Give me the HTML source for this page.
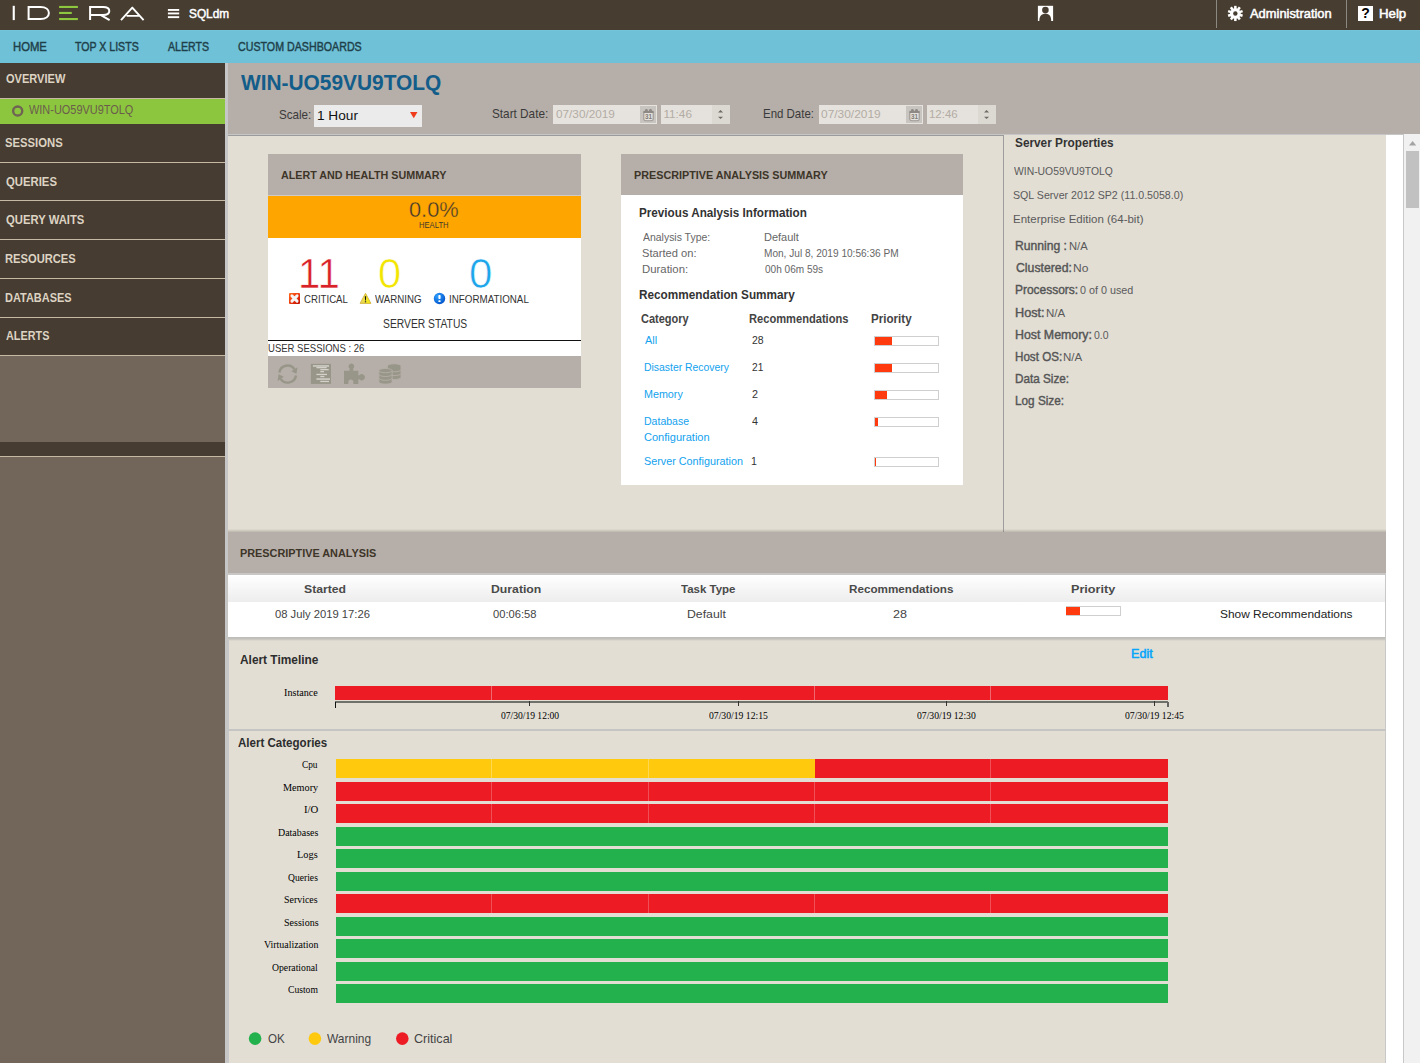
<!DOCTYPE html>
<html><head><meta charset="utf-8">
<style>
html,body{margin:0;padding:0;}
body{width:1420px;height:1063px;overflow:hidden;position:relative;background:#e2ded4;font-family:"Liberation Sans",sans-serif;}
.b{position:absolute;}
.t{position:absolute;white-space:pre;transform-origin:0 0;}
svg{position:absolute;overflow:visible;}
</style></head><body>
<!-- top bar -->
<div class="b" style="left:0;top:0;width:1420px;height:30px;background:#473d31"></div>
<svg style="left:0;top:0" width="160" height="30">
 <rect x="12.7" y="5.8" width="2.1" height="14.3" fill="#fff"/>
 <path d="M28.6,6.9 V19.05 H40.5 C46,19.05 48.9,16.2 48.9,12.97 C48.9,9.7 46,6.9 40.5,6.9 Z" fill="none" stroke="#fff" stroke-width="2.0"/>
 <rect x="59.1" y="5.9" width="18.8" height="2.1" fill="#8dc63f"/>
 <rect x="59.1" y="11.9" width="12.7" height="2.1" fill="#8dc63f"/>
 <rect x="59.1" y="18" width="18.8" height="2.1" fill="#8dc63f"/>
 <path d="M90.1,20.1 V6.9 H103 C107.5,6.9 109.3,8.6 109.3,10.9 C109.3,13.2 107.5,14.9 103,14.9 H90.1 M100.5,14.9 L109.6,20.2" fill="none" stroke="#fff" stroke-width="2.0"/>
 <path d="M121,20.1 L132.3,7.6 L143.6,20.1 M126.6,15.9 H140.2" fill="none" stroke="#fff" stroke-width="1.9" stroke-linejoin="round"/>
 <rect x="167.9" y="9" width="11.3" height="1.9" fill="#fff"/>
 <rect x="167.9" y="12.5" width="11.3" height="1.9" fill="#fff"/>
 <rect x="167.9" y="16.2" width="11.3" height="1.9" fill="#fff"/>
</svg>
<svg style="left:1030px;top:0" width="40" height="30">
 <rect x="7.9" y="5.8" width="15.2" height="15.2" fill="#fff"/>
 <circle cx="15.4" cy="10.1" r="3.3" fill="#473d31"/>
 <path d="M9.3,21 C9.3,16.2 11.5,13.8 15.4,13.8 C19.3,13.8 21.2,16.2 21.2,21 Z" fill="#473d31"/>
</svg>
<div class="b" style="left:1216px;top:0;width:1.4px;height:28px;background:#8c8882"></div>
<div class="b" style="left:1346px;top:0;width:1.4px;height:28px;background:#8c8882"></div>
<svg style="left:1220px;top:0px" width="30" height="30"><g transform="translate(15.35,13.45)"><g fill="#fff"><circle cx="0" cy="0" r="5.3"/><rect x="-1.25" y="-7.6" width="2.5" height="3.4" transform="rotate(0)"/><rect x="-1.25" y="-7.6" width="2.5" height="3.4" transform="rotate(36)"/><rect x="-1.25" y="-7.6" width="2.5" height="3.4" transform="rotate(72)"/><rect x="-1.25" y="-7.6" width="2.5" height="3.4" transform="rotate(108)"/><rect x="-1.25" y="-7.6" width="2.5" height="3.4" transform="rotate(144)"/><rect x="-1.25" y="-7.6" width="2.5" height="3.4" transform="rotate(180)"/><rect x="-1.25" y="-7.6" width="2.5" height="3.4" transform="rotate(216)"/><rect x="-1.25" y="-7.6" width="2.5" height="3.4" transform="rotate(252)"/><rect x="-1.25" y="-7.6" width="2.5" height="3.4" transform="rotate(288)"/><rect x="-1.25" y="-7.6" width="2.5" height="3.4" transform="rotate(324)"/></g><circle cx="0" cy="0" r="2.2" fill="#473d31"/></g></svg>
<div class="b" style="left:1357.9px;top:5.9px;width:15.1px;height:14.9px;background:#fff"></div>
<div class="t" style="left:1361.2px;top:6.2px;font-size:14px;line-height:14px;font-weight:bold;color:#000">?</div>

<!-- nav -->
<div class="b" style="left:0;top:30px;width:1420px;height:33px;background:#6ec1d6"></div>
<div class="b" style="left:0;top:30px;width:1420px;height:1px;background:#74c5da"></div>

<!-- sidebar -->
<div class="b" style="left:0;top:63px;width:225px;height:1000px;background:#72665a"></div>
<div class="b" style="left:0;top:63px;width:225px;height:292px;background:#463c31"></div>
<div class="b" style="left:0;top:98px;width:225px;height:1px;background:#c6b9a4"></div>
<div class="b" style="left:0;top:99px;width:225px;height:25px;background:#8cc63f"></div>
<div class="b" style="left:0;top:162px;width:225px;height:1px;background:#c6b9a4"></div>
<div class="b" style="left:0;top:200px;width:225px;height:1px;background:#c6b9a4"></div>
<div class="b" style="left:0;top:239px;width:225px;height:1px;background:#c6b9a4"></div>
<div class="b" style="left:0;top:278px;width:225px;height:1px;background:#c6b9a4"></div>
<div class="b" style="left:0;top:317px;width:225px;height:1px;background:#c6b9a4"></div>
<div class="b" style="left:0;top:355px;width:225px;height:1px;background:#c6b9a4"></div>
<div class="b" style="left:0;top:442px;width:225px;height:14px;background:#463c31"></div>
<div class="b" style="left:0;top:456px;width:225px;height:1px;background:#c6b9a4"></div>
<svg style="left:0;top:99px" width="40" height="25">
 <circle cx="17.7" cy="12" r="4.55" fill="none" stroke="#6f6354" stroke-width="2.4"/>
</svg>
<div class="b" style="left:225px;top:63px;width:3px;height:1000px;background:#c6c6c6"></div>

<!-- header -->
<div class="b" style="left:228px;top:63px;width:1192px;height:71px;background:#b6aea8"></div>
<div class="b" style="left:228px;top:134px;width:1176px;height:1px;background:#c6c6c6"></div>
<div class="b" style="left:228px;top:135px;width:776px;height:1px;background:#9b9b9b"></div>
<div class="b" style="left:314.2px;top:105.3px;width:107.7px;height:21.5px;background:#ebebeb"></div>
<svg style="left:409.5px;top:111.5px" width="8" height="7"><path d="M0,0 H7.5 L3.75,6.3 Z" fill="#f03c1c"/></svg>
<!-- start date -->
<div class="b" style="left:553px;top:105.2px;width:104px;height:18.7px;background:#e6e3de"></div>
<div class="b" style="left:640px;top:105.9px;width:16px;height:16.8px;background:#c8c4c0"></div>
<svg style="left:640px;top:105.9px" width="16" height="17">
 <rect x="3.8" y="5.6" width="9.4" height="9.1" rx="1.6" fill="#e4e1dc" stroke="#9d9792" stroke-width="1.1"/>
 <rect x="3.4" y="4.9" width="10.2" height="2.1" fill="#8e8984"/>
 <circle cx="6.4" cy="4.3" r="1.4" fill="#8e8984"/><circle cx="10.5" cy="4.3" r="1.4" fill="#8e8984"/>
 <text x="8.5" y="13.2" font-family="Liberation Sans" font-size="6.3" font-weight="bold" text-anchor="middle" fill="#807b76">31</text>
</svg>
<div class="b" style="left:661px;top:105px;width:69px;height:19px;background:#e5e2dd"></div>
<div class="b" style="left:712px;top:105px;width:18px;height:19px;background:#dcd9d3"></div>
<svg style="left:717.9px;top:110px" width="6" height="10"><path d="M0,2.4 L2.55,0 L5.1,2.4 Z M0,6.7 H5.1 L2.55,9 Z" fill="#6e6a66"/></svg>
<!-- end date -->
<div class="b" style="left:819px;top:105.2px;width:104px;height:18.7px;background:#e6e3de"></div>
<div class="b" style="left:906px;top:105.9px;width:16px;height:16.8px;background:#c8c4c0"></div>
<svg style="left:906px;top:105.9px" width="16" height="17">
 <rect x="3.8" y="5.6" width="9.4" height="9.1" rx="1.6" fill="#e4e1dc" stroke="#9d9792" stroke-width="1.1"/>
 <rect x="3.4" y="4.9" width="10.2" height="2.1" fill="#8e8984"/>
 <circle cx="6.4" cy="4.3" r="1.4" fill="#8e8984"/><circle cx="10.5" cy="4.3" r="1.4" fill="#8e8984"/>
 <text x="8.5" y="13.2" font-family="Liberation Sans" font-size="6.3" font-weight="bold" text-anchor="middle" fill="#807b76">31</text>
</svg>
<div class="b" style="left:927px;top:105px;width:69px;height:19px;background:#e5e2dd"></div>
<div class="b" style="left:978px;top:105px;width:18px;height:19px;background:#dcd9d3"></div>
<svg style="left:983.9px;top:110px" width="6" height="10"><path d="M0,2.4 L2.55,0 L5.1,2.4 Z M0,6.7 H5.1 L2.55,9 Z" fill="#6e6a66"/></svg>

<!-- right strip + scrollbar -->
<div class="b" style="left:1386px;top:135px;width:18px;height:928px;background:#ffffff"></div>
<div class="b" style="left:1403px;top:134px;width:1px;height:929px;background:#c8c8c8"></div>
<div class="b" style="left:1404px;top:134px;width:16px;height:929px;background:#f1f1f1"></div>
<svg style="left:1408.9px;top:140.7px" width="8" height="5"><path d="M0,4.4 L3.6,0 L7.2,4.4 Z" fill="#a3a3a3"/></svg>
<div class="b" style="left:1406px;top:151px;width:13px;height:56.7px;background:#c1c1c1"></div>

<!-- divider -->
<div class="b" style="left:1003px;top:136px;width:1.3px;height:396px;background:#9d9d9d"></div>

<!-- alert card -->
<div class="b" style="left:268px;top:154px;width:313px;height:41px;background:#b6aea8"></div>
<div class="b" style="left:268px;top:195px;width:313px;height:1px;background:#cfcac5"></div>
<div class="b" style="left:268px;top:196px;width:313px;height:42px;background:#ffa500"></div>
<div class="b" style="left:268px;top:238px;width:313px;height:118px;background:#ffffff"></div>
<div class="b" style="left:268px;top:340px;width:313px;height:1.2px;background:#111"></div>
<div class="b" style="left:268px;top:356px;width:313px;height:32px;background:#b6aea8"></div>
<svg style="left:280px;top:288px" width="180" height="20">
 <defs>
  <linearGradient id="gc" x1="0" y1="0" x2="1" y2="1"><stop offset="0" stop-color="#ff6a1a"/><stop offset="0.5" stop-color="#ee3a10"/><stop offset="1" stop-color="#b80c00"/></linearGradient>
  <linearGradient id="gw" x1="0" y1="0" x2="1" y2="0"><stop offset="0" stop-color="#e6d46a"/><stop offset="1" stop-color="#f7f000"/></linearGradient>
  <radialGradient id="gi" cx="0.35" cy="0.3" r="0.8"><stop offset="0" stop-color="#2ea0ff"/><stop offset="1" stop-color="#0050c8"/></radialGradient>
 </defs>
 <rect x="9" y="5" width="11" height="11" rx="1" fill="url(#gc)"/>
 <path d="M11.9,7.9 L17.1,13.1 M17.1,7.9 L11.9,13.1" stroke="#f4f4f4" stroke-width="2.9" stroke-linecap="round"/>
 <path d="M85.5,5.3 L90.9,15.4 H80.1 Z" fill="url(#gw)" stroke="#d2b43c" stroke-width="0.9" stroke-linejoin="round"/>
 <path d="M84.8,8.2 H86.2 L85.9,12.4 H85.1 Z" fill="#111"/><circle cx="85.5" cy="13.7" r="0.75" fill="#333"/>
 <circle cx="159.5" cy="10.5" r="5.7" fill="url(#gi)"/>
 <rect x="158.4" y="7" width="2.2" height="4" rx="0.8" fill="#fff"/><rect x="158.4" y="12.2" width="2.2" height="1.9" rx="0.6" fill="#fff"/>
</svg>
<!-- footer icons -->
<svg style="left:270px;top:356px" width="140" height="32">
 <g fill="none" stroke="#979688" stroke-width="2.4">
  <path d="M9.3,16.5 A8.4,8.4 0 0 1 24.5,13.2"/>
  <path d="M26,19.5 A8.4,8.4 0 0 1 10.7,22.8"/>
 </g>
 <g fill="#979688">
  <path d="M27.6,11.2 L21.4,15.2 L26.4,17.8 Z"/>
  <path d="M7.6,25 L13.8,20.8 L8.6,18.2 Z"/>
  <rect x="40.9" y="7.9" width="20.1" height="20"/>
 </g>
 <g fill="#d3d1ca">
  <rect x="42.9" y="9.2" width="16.1" height="1.5"/>
  <rect x="46.4" y="11" width="10.3" height="1.3"/>
  <rect x="50.3" y="13" width="8.4" height="1.3"/>
  <rect x="50.3" y="15" width="3.7" height="1.3"/>
  <rect x="46.4" y="17.8" width="10.6" height="1.3"/>
  <rect x="50.3" y="19.9" width="4.1" height="1.3"/>
  <rect x="46.4" y="22.3" width="13.6" height="1.5"/>
  <rect x="50.3" y="24.8" width="8.7" height="1.3"/>
 </g>
 <g fill="#979688">
  <path d="M74,14.8 H79.6 V12.4 A2.7,2.7 0 1 1 83.2,12.4 V14.8 H88.3 V19.3 H89.5 A3,3 0 1 1 89.5,23.2 H88.3 V27.9 H83.4 V25.6 A2.6,2.6 0 0 0 78.3,25.6 V27.9 H74 Z"/>
 </g>
 <g fill="#979688" stroke="#b6aea8" stroke-width="0.9">
  <path d="M117.4,9.9 A6.8,2.1 0 0 1 131,9.9 V21.4 A6.8,2.1 0 0 1 117.4,21.4 Z"/>
  <path d="M117.4,13.7 A6.8,2.1 0 0 0 131,13.7 M117.4,17.5 A6.8,2.1 0 0 0 131,17.5" fill="none"/>
  <path d="M108.9,14.6 A6.6,2.1 0 0 1 122.1,14.6 V26 A6.6,2.1 0 0 1 108.9,26 Z"/>
  <path d="M108.9,14.6 A6.6,2.1 0 0 0 122.1,14.6 M108.9,18.4 A6.6,2.1 0 0 0 122.1,18.4 M108.9,22.2 A6.6,2.1 0 0 0 122.1,22.2" fill="none"/>
 </g>
</svg>

<!-- prescriptive summary card -->
<div class="b" style="left:621px;top:154px;width:342px;height:41.6px;background:#b6aea8"></div>
<div class="b" style="left:621px;top:195px;width:342px;height:290px;background:#ffffff"></div>
<!-- priority bars -->
<div class="b" style="left:874px;top:335.7px;width:64.5px;height:10px;box-sizing:border-box;border:1px solid #cfcfcf;background:#fff"></div>
<div class="b" style="left:874.5px;top:336.5px;width:17.6px;height:8.4px;background:#ff3a0f"></div>
<div class="b" style="left:874px;top:362.8px;width:64.5px;height:10px;box-sizing:border-box;border:1px solid #cfcfcf;background:#fff"></div>
<div class="b" style="left:874.5px;top:363.6px;width:17.6px;height:8.4px;background:#ff3a0f"></div>
<div class="b" style="left:874px;top:390px;width:64.5px;height:10px;box-sizing:border-box;border:1px solid #cfcfcf;background:#fff"></div>
<div class="b" style="left:874.5px;top:390.8px;width:12.5px;height:8.4px;background:#ff3a0f"></div>
<div class="b" style="left:874px;top:417px;width:64.5px;height:10px;box-sizing:border-box;border:1px solid #cfcfcf;background:#fff"></div>
<div class="b" style="left:874.5px;top:417.8px;width:3.7px;height:8.4px;background:#ff3a0f"></div>
<div class="b" style="left:874px;top:457px;width:64.5px;height:10px;box-sizing:border-box;border:1px solid #cfcfcf;background:#fff"></div>
<div class="b" style="left:874.5px;top:457.8px;width:1.7px;height:8.4px;background:#ff3a0f"></div>

<!-- PA table -->
<div class="b" style="left:228px;top:528.8px;width:1158px;height:3.2px;background:linear-gradient(rgba(120,110,100,0),rgba(120,110,100,0.35))"></div>
<div class="b" style="left:228px;top:532px;width:1158px;height:41px;background:#b6aea8"></div>
<div class="b" style="left:228px;top:572.7px;width:1158px;height:1.9px;background:#c9c7c5"></div>
<div class="b" style="left:228px;top:574.5px;width:1158px;height:27px;background:linear-gradient(#ffffff,#ededed)"></div>
<div class="b" style="left:228px;top:601.5px;width:1158px;height:35px;background:#ffffff"></div>
<div class="b" style="left:228px;top:637px;width:1158px;height:4px;background:linear-gradient(#bcbbb8 0%,#c4c2bd 50%,#e2ded4 100%)"></div>
<div class="b" style="left:1385px;top:573px;width:1.4px;height:490px;background:#c8c8c8"></div>
<div class="b" style="left:228px;top:640px;width:1.2px;height:423px;background:#c8c8c8"></div>
<div class="b" style="left:1065.7px;top:606px;width:55px;height:9.5px;box-sizing:border-box;border:1px solid #cfcfcf;background:#fff"></div>
<div class="b" style="left:1066.2px;top:606.8px;width:14px;height:8px;background:#ff3a0f"></div>

<!-- timeline -->
<div class="b" style="left:335.2px;top:685.8px;width:832.8px;height:14.1px;background:#ed1c24"></div>
<div class="b" style="left:491px;top:686px;width:1px;height:14px;background:#f0686d"></div>
<div class="b" style="left:814px;top:686px;width:1px;height:14px;background:#f0686d"></div>
<div class="b" style="left:990px;top:686px;width:1px;height:14px;background:#f0686d"></div>
<div class="b" style="left:335px;top:701.2px;width:833px;height:1.6px;background:#70706b"></div>
<div class="b" style="left:334.9px;top:701.5px;width:1.3px;height:6px;background:#111"></div>
<div class="b" style="left:529px;top:701px;width:1.2px;height:5px;background:#333"></div>
<div class="b" style="left:737.5px;top:701px;width:1.2px;height:5px;background:#333"></div>
<div class="b" style="left:946px;top:701px;width:1.2px;height:5px;background:#333"></div>
<div class="b" style="left:1154px;top:701px;width:1.2px;height:5px;background:#333"></div>
<div class="b" style="left:1167.3px;top:701.5px;width:1.3px;height:5.5px;background:#666"></div>
<div class="b" style="left:228px;top:729px;width:1158px;height:2px;background:#c5c5c3"></div>

<!-- categories -->
<div id="cats"></div>
<div class="b" style="left:335.5px;top:759.0px;width:479.3px;height:19px;background:#ffc90e"></div>
<div class="b" style="left:815px;top:759.0px;width:353px;height:19px;background:#ed1c24"></div>
<div class="b" style="left:491px;top:759.0px;width:1px;height:19px;background:#ffd84f"></div>
<div class="b" style="left:648px;top:759.0px;width:1px;height:19px;background:#ffd84f"></div>
<div class="b" style="left:990px;top:759.0px;width:1px;height:19px;background:#ef5055"></div>
<div class="b" style="left:335.5px;top:782.0px;width:832.5px;height:19px;background:#ed1c24"></div>
<div class="b" style="left:491px;top:782.0px;width:1px;height:19px;background:#ef5055"></div>
<div class="b" style="left:648px;top:782.0px;width:1px;height:19px;background:#ef5055"></div>
<div class="b" style="left:814px;top:782.0px;width:1px;height:19px;background:#ef5055"></div>
<div class="b" style="left:990px;top:782.0px;width:1px;height:19px;background:#ef5055"></div>
<div class="b" style="left:335.5px;top:804.0px;width:832.5px;height:19px;background:#ed1c24"></div>
<div class="b" style="left:491px;top:804.0px;width:1px;height:19px;background:#ef5055"></div>
<div class="b" style="left:648px;top:804.0px;width:1px;height:19px;background:#ef5055"></div>
<div class="b" style="left:814px;top:804.0px;width:1px;height:19px;background:#ef5055"></div>
<div class="b" style="left:990px;top:804.0px;width:1px;height:19px;background:#ef5055"></div>
<div class="b" style="left:335.5px;top:826.5px;width:832.5px;height:19px;background:#22b14c"></div>
<div class="b" style="left:335.5px;top:849.0px;width:832.5px;height:19px;background:#22b14c"></div>
<div class="b" style="left:335.5px;top:871.5px;width:832.5px;height:19px;background:#22b14c"></div>
<div class="b" style="left:335.5px;top:894.0px;width:832.5px;height:19px;background:#ed1c24"></div>
<div class="b" style="left:491px;top:894.0px;width:1px;height:19px;background:#ef5055"></div>
<div class="b" style="left:648px;top:894.0px;width:1px;height:19px;background:#ef5055"></div>
<div class="b" style="left:814px;top:894.0px;width:1px;height:19px;background:#ef5055"></div>
<div class="b" style="left:990px;top:894.0px;width:1px;height:19px;background:#ef5055"></div>
<div class="b" style="left:335.5px;top:917.0px;width:832.5px;height:19px;background:#22b14c"></div>
<div class="b" style="left:335.5px;top:939.0px;width:832.5px;height:19px;background:#22b14c"></div>
<div class="b" style="left:335.5px;top:961.5px;width:832.5px;height:19px;background:#22b14c"></div>
<div class="b" style="left:335.5px;top:984.0px;width:832.5px;height:19px;background:#22b14c"></div>
<!-- legend -->
<svg style="left:0;top:0" width="1" height="1">
 <circle cx="255.1" cy="1038.6" r="6.3" fill="#22b14c"/>
 <circle cx="314.9" cy="1038.6" r="6.3" fill="#ffc90e"/>
 <circle cx="402.3" cy="1038.6" r="6.3" fill="#ed1c24"/>
</svg>

<div class="t" style="left:189.20px;top:7.90px;font-family:'Liberation Sans';font-size:12.791px;line-height:12.791px;font-weight:normal;color:#ffffff;transform:scaleX(0.9256);;-webkit-text-stroke:0.50px #ffffff">SQLdm</div>
<div class="t" style="left:1249.70px;top:7.60px;font-family:'Liberation Sans';font-size:12.500px;line-height:12.500px;font-weight:normal;color:#ffffff;transform:scaleX(1.0316);;-webkit-text-stroke:0.50px #ffffff">Administration</div>
<div class="t" style="left:1378.96px;top:7.90px;font-family:'Liberation Sans';font-size:12.791px;line-height:12.791px;font-weight:normal;color:#ffffff;transform:scaleX(1.0360);;-webkit-text-stroke:0.50px #ffffff">Help</div>
<div class="t" style="left:12.64px;top:40.00px;font-family:'Liberation Sans';font-size:13.081px;line-height:13.081px;font-weight:normal;color:#1f3f4a;transform:scaleX(0.8632);;-webkit-text-stroke:0.45px #1f3f4a">HOME</div>
<div class="t" style="left:75.40px;top:40.00px;font-family:'Liberation Sans';font-size:13.081px;line-height:13.081px;font-weight:normal;color:#1f3f4a;transform:scaleX(0.8089);;-webkit-text-stroke:0.45px #1f3f4a">TOP X LISTS</div>
<div class="t" style="left:168.00px;top:40.00px;font-family:'Liberation Sans';font-size:13.081px;line-height:13.081px;font-weight:normal;color:#1f3f4a;transform:scaleX(0.8098);;-webkit-text-stroke:0.45px #1f3f4a">ALERTS</div>
<div class="t" style="left:237.70px;top:40.00px;font-family:'Liberation Sans';font-size:13.081px;line-height:13.081px;font-weight:normal;color:#1f3f4a;transform:scaleX(0.8158);;-webkit-text-stroke:0.45px #1f3f4a">CUSTOM DASHBOARDS</div>
<div class="t" style="left:5.60px;top:73.80px;font-family:'Liberation Sans';font-size:11.919px;line-height:11.919px;font-weight:bold;color:#ddd3c3;transform:scaleX(0.9281);;">OVERVIEW</div>
<div class="t" style="left:29.00px;top:103.40px;font-family:'Liberation Sans';font-size:13.081px;line-height:13.081px;font-weight:normal;color:#6b5d4c;transform:scaleX(0.8363);;">WIN-UO59VU9TOLQ</div>
<div class="t" style="left:4.65px;top:138.30px;font-family:'Liberation Sans';font-size:11.919px;line-height:11.919px;font-weight:bold;color:#ddd3c3;transform:scaleX(0.9483);;">SESSIONS</div>
<div class="t" style="left:5.60px;top:176.90px;font-family:'Liberation Sans';font-size:11.919px;line-height:11.919px;font-weight:bold;color:#ddd3c3;transform:scaleX(0.9509);;">QUERIES</div>
<div class="t" style="left:5.60px;top:215.00px;font-family:'Liberation Sans';font-size:11.919px;line-height:11.919px;font-weight:bold;color:#ddd3c3;transform:scaleX(0.9476);;">QUERY WAITS</div>
<div class="t" style="left:4.66px;top:253.90px;font-family:'Liberation Sans';font-size:11.919px;line-height:11.919px;font-weight:bold;color:#ddd3c3;transform:scaleX(0.9378);;">RESOURCES</div>
<div class="t" style="left:4.68px;top:292.80px;font-family:'Liberation Sans';font-size:11.919px;line-height:11.919px;font-weight:bold;color:#ddd3c3;transform:scaleX(0.9211);;">DATABASES</div>
<div class="t" style="left:5.60px;top:331.00px;font-family:'Liberation Sans';font-size:11.919px;line-height:11.919px;font-weight:bold;color:#ddd3c3;transform:scaleX(0.9106);;">ALERTS</div>
<div class="t" style="left:241.00px;top:72.00px;font-family:'Liberation Sans';font-size:21.802px;line-height:21.802px;font-weight:bold;color:#125d8a;transform:scaleX(0.9577);;">WIN-UO59VU9TOLQ</div>
<div class="t" style="left:278.54px;top:108.20px;font-family:'Liberation Sans';font-size:13.517px;line-height:13.517px;font-weight:normal;color:#3a3a3a;transform:scaleX(0.8600);;">Scale:</div>
<div class="t" style="left:317.29px;top:109.00px;font-family:'Liberation Sans';font-size:13.517px;line-height:13.517px;font-weight:normal;color:#111111;transform:scaleX(1.0103);;">1 Hour</div>
<div class="t" style="left:492.49px;top:107.80px;font-family:'Liberation Sans';font-size:12.936px;line-height:12.936px;font-weight:normal;color:#3a3a3a;transform:scaleX(0.9100);;">Start Date:</div>
<div class="t" style="left:556.00px;top:107.90px;font-family:'Liberation Sans';font-size:11.773px;line-height:11.773px;font-weight:normal;color:#b3aca4;transform:scaleX(1.0000);;">07/30/2019</div>
<div class="t" style="left:663.40px;top:107.90px;font-family:'Liberation Sans';font-size:11.773px;line-height:11.773px;font-weight:normal;color:#b3aca4;transform:scaleX(1.0000);;">11:46</div>
<div class="t" style="left:763.11px;top:107.80px;font-family:'Liberation Sans';font-size:12.936px;line-height:12.936px;font-weight:normal;color:#3a3a3a;transform:scaleX(0.8875);;">End Date:</div>
<div class="t" style="left:821.40px;top:107.90px;font-family:'Liberation Sans';font-size:11.773px;line-height:11.773px;font-weight:normal;color:#b3aca4;transform:scaleX(1.0138);;">07/30/2019</div>
<div class="t" style="left:929.43px;top:107.90px;font-family:'Liberation Sans';font-size:11.773px;line-height:11.773px;font-weight:normal;color:#b3aca4;transform:scaleX(0.9714);;">12:46</div>
<div class="t" style="left:280.90px;top:169.00px;font-family:'Liberation Sans';font-size:11.628px;line-height:11.628px;font-weight:bold;color:#3d3528;transform:scaleX(0.9246);;">ALERT AND HEALTH SUMMARY</div>
<div class="t" style="left:408.93px;top:198.80px;font-family:'Liberation Sans';font-size:22.529px;line-height:22.529px;font-weight:normal;color:#3d3a2c;transform:scaleX(0.9680);-webkit-text-stroke:0.35px #ffa500;">0.0%</div>
<div class="t" style="left:418.86px;top:221.80px;font-family:'Liberation Sans';font-size:8.140px;line-height:8.140px;font-weight:normal;color:#3d3a2c;transform:scaleX(0.9400);;">HEALTH</div>
<div class="t" style="left:297.56px;top:252.30px;font-family:'Liberation Sans';font-size:42.878px;line-height:42.878px;font-weight:normal;color:#d92128;transform:scaleX(0.9381);-webkit-text-stroke:0.6px #fff;">11</div>
<div class="t" style="left:378.45px;top:252.30px;font-family:'Liberation Sans';font-size:42.878px;line-height:42.878px;font-weight:normal;color:#f2e500;transform:scaleX(0.9750);-webkit-text-stroke:0.6px #fff;">0</div>
<div class="t" style="left:469.14px;top:252.30px;font-family:'Liberation Sans';font-size:42.878px;line-height:42.878px;font-weight:normal;color:#1ea5ea;transform:scaleX(0.9800);-webkit-text-stroke:0.6px #fff;">0</div>
<div class="t" style="left:303.85px;top:293.90px;font-family:'Liberation Sans';font-size:11.337px;line-height:11.337px;font-weight:normal;color:#333333;transform:scaleX(0.8500);;">CRITICAL</div>
<div class="t" style="left:375.40px;top:293.90px;font-family:'Liberation Sans';font-size:11.337px;line-height:11.337px;font-weight:normal;color:#333333;transform:scaleX(0.8556);;">WARNING</div>
<div class="t" style="left:448.94px;top:293.90px;font-family:'Liberation Sans';font-size:11.337px;line-height:11.337px;font-weight:normal;color:#333333;transform:scaleX(0.8648);;">INFORMATIONAL</div>
<div class="t" style="left:382.70px;top:318.20px;font-family:'Liberation Sans';font-size:12.936px;line-height:12.936px;font-weight:normal;color:#333333;transform:scaleX(0.7981);;">SERVER STATUS</div>
<div class="t" style="left:267.95px;top:343.40px;font-family:'Liberation Sans';font-size:11.192px;line-height:11.192px;font-weight:normal;color:#333333;transform:scaleX(0.8518);;">USER SESSIONS : 26</div>
<div class="t" style="left:634.25px;top:169.90px;font-family:'Liberation Sans';font-size:11.337px;line-height:11.337px;font-weight:bold;color:#3d3528;transform:scaleX(0.9525);;">PRESCRIPTIVE ANALYSIS SUMMARY</div>
<div class="t" style="left:638.63px;top:206.20px;font-family:'Liberation Sans';font-size:13.517px;line-height:13.517px;font-weight:bold;color:#333333;transform:scaleX(0.8661);;">Previous Analysis Information</div>
<div class="t" style="left:642.90px;top:232.00px;font-family:'Liberation Sans';font-size:11.047px;line-height:11.047px;font-weight:normal;color:#666666;transform:scaleX(0.9471);;">Analysis Type:</div>
<div class="t" style="left:764.10px;top:232.00px;font-family:'Liberation Sans';font-size:11.047px;line-height:11.047px;font-weight:normal;color:#666666;transform:scaleX(0.9971);;">Default</div>
<div class="t" style="left:641.89px;top:247.90px;font-family:'Liberation Sans';font-size:11.047px;line-height:11.047px;font-weight:normal;color:#666666;transform:scaleX(1.0096);;">Started on:</div>
<div class="t" style="left:764.19px;top:247.90px;font-family:'Liberation Sans';font-size:11.047px;line-height:11.047px;font-weight:normal;color:#666666;transform:scaleX(0.9144);;">Mon, Jul 8, 2019 10:56:36 PM</div>
<div class="t" style="left:641.87px;top:263.50px;font-family:'Liberation Sans';font-size:11.047px;line-height:11.047px;font-weight:normal;color:#666666;transform:scaleX(1.0302);;">Duration:</div>
<div class="t" style="left:765.10px;top:263.50px;font-family:'Liberation Sans';font-size:11.047px;line-height:11.047px;font-weight:normal;color:#666666;transform:scaleX(0.9109);;">00h 06m 59s</div>
<div class="t" style="left:638.63px;top:288.20px;font-family:'Liberation Sans';font-size:13.517px;line-height:13.517px;font-weight:bold;color:#333333;transform:scaleX(0.8723);;">Recommendation Summary</div>
<div class="t" style="left:641.20px;top:313.20px;font-family:'Liberation Sans';font-size:12.791px;line-height:12.791px;font-weight:bold;color:#444444;transform:scaleX(0.8618);;">Category</div>
<div class="t" style="left:748.63px;top:313.20px;font-family:'Liberation Sans';font-size:12.791px;line-height:12.791px;font-weight:bold;color:#444444;transform:scaleX(0.8699);;">Recommendations</div>
<div class="t" style="left:870.59px;top:313.20px;font-family:'Liberation Sans';font-size:12.791px;line-height:12.791px;font-weight:bold;color:#444444;transform:scaleX(0.9068);;">Priority</div>
<div class="t" style="left:644.90px;top:335.20px;font-family:'Liberation Sans';font-size:11.337px;line-height:11.337px;font-weight:normal;color:#12a2ee;transform:scaleX(0.9583);;">All</div>
<div class="t" style="left:752.30px;top:335.20px;font-family:'Liberation Sans';font-size:11.337px;line-height:11.337px;font-weight:normal;color:#333333;transform:scaleX(0.9250);;">28</div>
<div class="t" style="left:643.98px;top:362.30px;font-family:'Liberation Sans';font-size:11.337px;line-height:11.337px;font-weight:normal;color:#12a2ee;transform:scaleX(0.9187);;">Disaster Recovery</div>
<div class="t" style="left:752.30px;top:362.30px;font-family:'Liberation Sans';font-size:11.337px;line-height:11.337px;font-weight:normal;color:#333333;transform:scaleX(0.9000);;">21</div>
<div class="t" style="left:643.95px;top:389.40px;font-family:'Liberation Sans';font-size:11.337px;line-height:11.337px;font-weight:normal;color:#12a2ee;transform:scaleX(0.9475);;">Memory</div>
<div class="t" style="left:752.30px;top:389.40px;font-family:'Liberation Sans';font-size:11.337px;line-height:11.337px;font-weight:normal;color:#333333;transform:scaleX(0.9500);;">2</div>
<div class="t" style="left:643.97px;top:416.10px;font-family:'Liberation Sans';font-size:11.337px;line-height:11.337px;font-weight:normal;color:#12a2ee;transform:scaleX(0.9298);;">Database</div>
<div class="t" style="left:752.30px;top:416.10px;font-family:'Liberation Sans';font-size:11.337px;line-height:11.337px;font-weight:normal;color:#333333;transform:scaleX(0.9500);;">4</div>
<div class="t" style="left:643.93px;top:432.00px;font-family:'Liberation Sans';font-size:11.337px;line-height:11.337px;font-weight:normal;color:#12a2ee;transform:scaleX(0.9742);;">Configuration</div>
<div class="t" style="left:643.95px;top:456.10px;font-family:'Liberation Sans';font-size:11.337px;line-height:11.337px;font-weight:normal;color:#12a2ee;transform:scaleX(0.9529);;">Server Configuration</div>
<div class="t" style="left:751.36px;top:456.10px;font-family:'Liberation Sans';font-size:11.337px;line-height:11.337px;font-weight:normal;color:#333333;transform:scaleX(0.9400);;">1</div>
<div class="t" style="left:1015.12px;top:136.00px;font-family:'Liberation Sans';font-size:13.372px;line-height:13.372px;font-weight:bold;color:#333333;transform:scaleX(0.8845);;">Server Properties</div>
<div class="t" style="left:1013.60px;top:166.20px;font-family:'Liberation Sans';font-size:11.337px;line-height:11.337px;font-weight:normal;color:#5a5a5a;transform:scaleX(0.9148);;">WIN-UO59VU9TOLQ</div>
<div class="t" style="left:1012.66px;top:189.90px;font-family:'Liberation Sans';font-size:11.337px;line-height:11.337px;font-weight:normal;color:#5a5a5a;transform:scaleX(0.9383);;">SQL Server 2012 SP2 (11.0.5058.0)</div>
<div class="t" style="left:1012.58px;top:214.20px;font-family:'Liberation Sans';font-size:11.337px;line-height:11.337px;font-weight:normal;color:#5a5a5a;transform:scaleX(1.0157);;">Enterprise Edition (64-bit)</div>
<div class="t" style="left:1014.70px;top:239.90px;font-family:'Liberation Sans';font-size:12.209px;line-height:12.209px;font-weight:normal;color:#555555;transform:scaleX(0.9961);;-webkit-text-stroke:0.40px #555555">Running :</div>
<div class="t" style="left:1069.01px;top:240.90px;font-family:'Liberation Sans';font-size:11.337px;line-height:11.337px;font-weight:normal;color:#5a5a5a;transform:scaleX(0.9889);;">N/A</div>
<div class="t" style="left:1015.70px;top:261.80px;font-family:'Liberation Sans';font-size:12.209px;line-height:12.209px;font-weight:normal;color:#555555;transform:scaleX(1.0055);;-webkit-text-stroke:0.40px #555555">Clustered:</div>
<div class="t" style="left:1072.94px;top:262.80px;font-family:'Liberation Sans';font-size:11.337px;line-height:11.337px;font-weight:normal;color:#5a5a5a;transform:scaleX(1.0615);;">No</div>
<div class="t" style="left:1014.72px;top:284.20px;font-family:'Liberation Sans';font-size:12.209px;line-height:12.209px;font-weight:normal;color:#555555;transform:scaleX(0.9810);;-webkit-text-stroke:0.40px #555555">Processors:</div>
<div class="t" style="left:1079.90px;top:285.20px;font-family:'Liberation Sans';font-size:11.337px;line-height:11.337px;font-weight:normal;color:#5a5a5a;transform:scaleX(0.9500);;">0 of 0 used</div>
<div class="t" style="left:1014.66px;top:307.00px;font-family:'Liberation Sans';font-size:12.209px;line-height:12.209px;font-weight:normal;color:#555555;transform:scaleX(1.0407);;-webkit-text-stroke:0.40px #555555">Host:</div>
<div class="t" style="left:1045.68px;top:308.00px;font-family:'Liberation Sans';font-size:11.337px;line-height:11.337px;font-weight:normal;color:#5a5a5a;transform:scaleX(1.0167);;">N/A</div>
<div class="t" style="left:1014.69px;top:328.80px;font-family:'Liberation Sans';font-size:12.209px;line-height:12.209px;font-weight:normal;color:#555555;transform:scaleX(1.0149);;-webkit-text-stroke:0.40px #555555">Host Memory:</div>
<div class="t" style="left:1093.50px;top:329.80px;font-family:'Liberation Sans';font-size:11.337px;line-height:11.337px;font-weight:normal;color:#5a5a5a;transform:scaleX(0.9250);;">0.0</div>
<div class="t" style="left:1014.75px;top:350.70px;font-family:'Liberation Sans';font-size:12.209px;line-height:12.209px;font-weight:normal;color:#555555;transform:scaleX(0.9542);;-webkit-text-stroke:0.40px #555555">Host OS:</div>
<div class="t" style="left:1063.48px;top:351.70px;font-family:'Liberation Sans';font-size:11.337px;line-height:11.337px;font-weight:normal;color:#5a5a5a;transform:scaleX(1.0167);;">N/A</div>
<div class="t" style="left:1014.74px;top:372.90px;font-family:'Liberation Sans';font-size:12.209px;line-height:12.209px;font-weight:normal;color:#555555;transform:scaleX(0.9618);;-webkit-text-stroke:0.40px #555555">Data Size:</div>
<div class="t" style="left:1014.73px;top:394.50px;font-family:'Liberation Sans';font-size:12.209px;line-height:12.209px;font-weight:normal;color:#555555;transform:scaleX(0.9653);;-webkit-text-stroke:0.40px #555555">Log Size:</div>
<div class="t" style="left:239.76px;top:546.70px;font-family:'Liberation Sans';font-size:11.628px;line-height:11.628px;font-weight:bold;color:#3d3528;transform:scaleX(0.9354);;">PRESCRIPTIVE ANALYSIS</div>
<div class="t" style="left:303.70px;top:582.80px;font-family:'Liberation Sans';font-size:11.773px;line-height:11.773px;font-weight:bold;color:#4a4a4a;transform:scaleX(1.0375);;">Started</div>
<div class="t" style="left:491.16px;top:582.80px;font-family:'Liberation Sans';font-size:11.773px;line-height:11.773px;font-weight:bold;color:#4a4a4a;transform:scaleX(1.0404);;">Duration</div>
<div class="t" style="left:681.30px;top:582.80px;font-family:'Liberation Sans';font-size:11.773px;line-height:11.773px;font-weight:bold;color:#4a4a4a;transform:scaleX(0.9750);;">Task Type</div>
<div class="t" style="left:848.61px;top:582.80px;font-family:'Liberation Sans';font-size:11.773px;line-height:11.773px;font-weight:bold;color:#4a4a4a;transform:scaleX(0.9923);;">Recommendations</div>
<div class="t" style="left:1071.42px;top:582.80px;font-family:'Liberation Sans';font-size:11.773px;line-height:11.773px;font-weight:bold;color:#4a4a4a;transform:scaleX(1.0750);;">Priority</div>
<div class="t" style="left:275.30px;top:607.70px;font-family:'Liberation Sans';font-size:11.628px;line-height:11.628px;font-weight:normal;color:#444444;transform:scaleX(0.9673);;">08 July 2019 17:26</div>
<div class="t" style="left:492.90px;top:607.70px;font-family:'Liberation Sans';font-size:11.628px;line-height:11.628px;font-weight:normal;color:#444444;transform:scaleX(0.9622);;">00:06:58</div>
<div class="t" style="left:687.24px;top:607.70px;font-family:'Liberation Sans';font-size:11.628px;line-height:11.628px;font-weight:normal;color:#444444;transform:scaleX(1.0583);;">Default</div>
<div class="t" style="left:892.62px;top:607.70px;font-family:'Liberation Sans';font-size:11.628px;line-height:11.628px;font-weight:normal;color:#444444;transform:scaleX(1.0833);;">28</div>
<div class="t" style="left:1219.57px;top:608.30px;font-family:'Liberation Sans';font-size:11.628px;line-height:11.628px;font-weight:normal;color:#222222;transform:scaleX(1.0266);;">Show Recommendations</div>
<div class="t" style="left:239.90px;top:653.90px;font-family:'Liberation Sans';font-size:12.064px;line-height:12.064px;font-weight:bold;color:#2d2d2d;transform:scaleX(0.9861);;">Alert Timeline</div>
<div class="t" style="left:1131.48px;top:648.00px;font-family:'Liberation Sans';font-size:12.355px;line-height:12.355px;font-weight:normal;color:#08a6fa;transform:scaleX(1.0238);;-webkit-text-stroke:0.55px #08a6fa">Edit</div>
<div class="t" style="left:284.25px;top:686.80px;font-family:'Liberation Serif';font-size:10.687px;line-height:10.687px;font-weight:normal;color:#000000;transform:scaleX(0.9500);;">Instance</div>
<div class="t" style="left:500.70px;top:710.00px;font-family:'Liberation Serif';font-size:10.992px;line-height:10.992px;font-weight:normal;color:#000000;transform:scaleX(0.8701);;">07/30/19 12:00</div>
<div class="t" style="left:708.80px;top:710.00px;font-family:'Liberation Serif';font-size:10.992px;line-height:10.992px;font-weight:normal;color:#000000;transform:scaleX(0.8803);;">07/30/19 12:15</div>
<div class="t" style="left:916.50px;top:710.00px;font-family:'Liberation Serif';font-size:10.992px;line-height:10.992px;font-weight:normal;color:#000000;transform:scaleX(0.8791);;">07/30/19 12:30</div>
<div class="t" style="left:1125.00px;top:710.00px;font-family:'Liberation Serif';font-size:10.992px;line-height:10.992px;font-weight:normal;color:#000000;transform:scaleX(0.8803);;">07/30/19 12:45</div>
<div class="t" style="left:238.20px;top:737.70px;font-family:'Liberation Sans';font-size:11.919px;line-height:11.919px;font-weight:bold;color:#2d2d2d;transform:scaleX(0.9696);;">Alert Categories</div>
<div class="t" style="left:302.00px;top:759.20px;font-family:'Liberation Serif';font-size:10.687px;line-height:10.687px;font-weight:normal;color:#000000;transform:scaleX(0.8722);;">Cpu</div>
<div class="t" style="left:283.24px;top:782.00px;font-family:'Liberation Serif';font-size:10.687px;line-height:10.687px;font-weight:normal;color:#000000;transform:scaleX(0.9571);;">Memory</div>
<div class="t" style="left:303.59px;top:804.00px;font-family:'Liberation Serif';font-size:10.687px;line-height:10.687px;font-weight:normal;color:#000000;transform:scaleX(1.0077);;">I/O</div>
<div class="t" style="left:277.67px;top:826.90px;font-family:'Liberation Serif';font-size:10.687px;line-height:10.687px;font-weight:normal;color:#000000;transform:scaleX(0.9310);;">Databases</div>
<div class="t" style="left:297.33px;top:848.80px;font-family:'Liberation Serif';font-size:10.687px;line-height:10.687px;font-weight:normal;color:#000000;transform:scaleX(0.9700);;">Logs</div>
<div class="t" style="left:288.00px;top:872.00px;font-family:'Liberation Serif';font-size:10.687px;line-height:10.687px;font-weight:normal;color:#000000;transform:scaleX(0.9000);;">Queries</div>
<div class="t" style="left:284.27px;top:893.90px;font-family:'Liberation Serif';font-size:10.687px;line-height:10.687px;font-weight:normal;color:#000000;transform:scaleX(0.9286);;">Services</div>
<div class="t" style="left:283.86px;top:916.80px;font-family:'Liberation Serif';font-size:10.687px;line-height:10.687px;font-weight:normal;color:#000000;transform:scaleX(0.9400);;">Sessions</div>
<div class="t" style="left:263.87px;top:938.70px;font-family:'Liberation Serif';font-size:10.687px;line-height:10.687px;font-weight:normal;color:#000000;transform:scaleX(0.9281);;">Virtualization</div>
<div class="t" style="left:272.30px;top:961.60px;font-family:'Liberation Serif';font-size:10.687px;line-height:10.687px;font-weight:normal;color:#000000;transform:scaleX(0.9080);;">Operational</div>
<div class="t" style="left:288.00px;top:983.50px;font-family:'Liberation Serif';font-size:10.687px;line-height:10.687px;font-weight:normal;color:#000000;transform:scaleX(0.9000);;">Custom</div>
<div class="t" style="left:267.73px;top:1032.30px;font-family:'Liberation Sans';font-size:13.372px;line-height:13.372px;font-weight:normal;color:#444444;transform:scaleX(0.8667);;">OK</div>
<div class="t" style="left:327.40px;top:1032.30px;font-family:'Liberation Sans';font-size:13.372px;line-height:13.372px;font-weight:normal;color:#444444;transform:scaleX(0.8959);;">Warning</div>
<div class="t" style="left:414.16px;top:1032.30px;font-family:'Liberation Sans';font-size:13.372px;line-height:13.372px;font-weight:normal;color:#444444;transform:scaleX(0.9410);;">Critical</div>
</body></html>
